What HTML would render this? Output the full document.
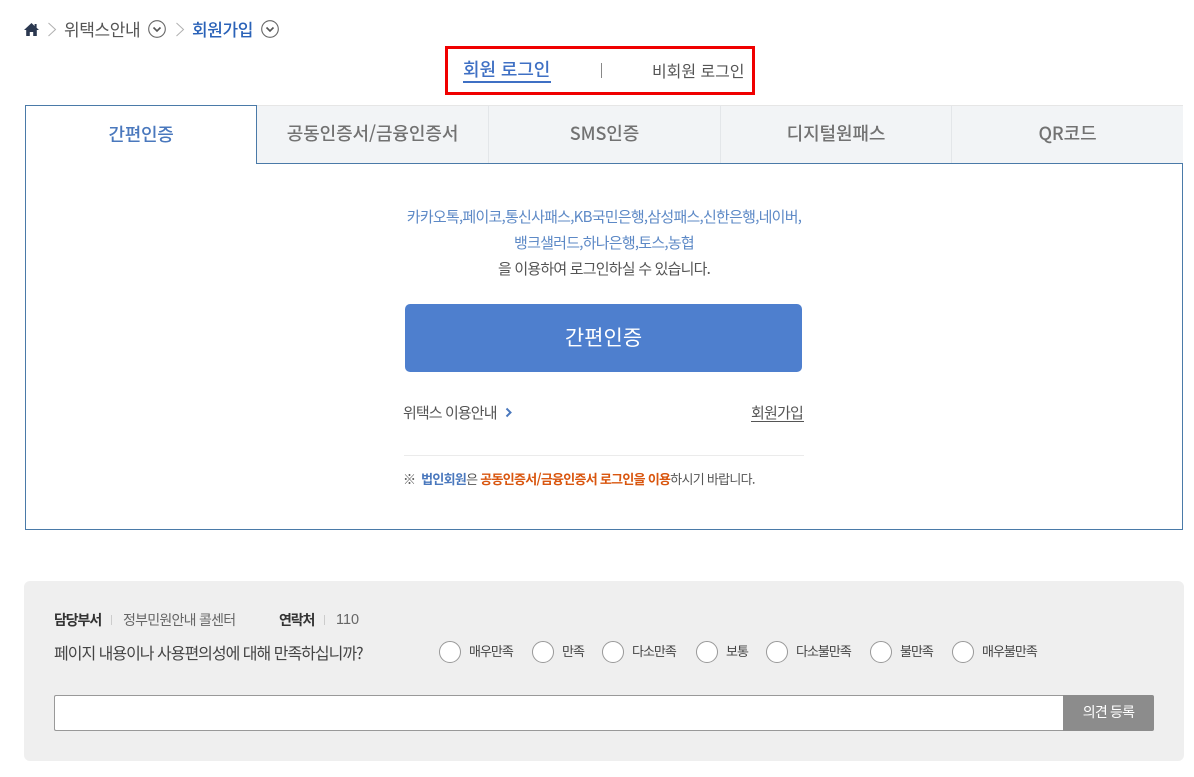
<!DOCTYPE html>
<html lang="ko"><head><meta charset="utf-8"><title>회원가입</title>
<style>
*{box-sizing:border-box}
html,body{margin:0;padding:0;background:#fff}
body{width:1194px;height:777px;position:relative;overflow:hidden;font-family:"Noto Sans CJK KR","Liberation Sans",sans-serif;color:#444}
.a{position:absolute;white-space:nowrap;line-height:1}
.tab{position:absolute;top:105px;height:58px;background:#f2f4f6;border-top:1px solid #e6e6e6;border-right:1px solid #e3e6e9;text-align:center;font-size:18px;font-weight:500;line-height:54px;color:#727272;letter-spacing:-.1px}
.r{position:absolute;top:641px;width:22px;height:22px;border:1px solid #999;border-radius:50%;background:#fff}
.l{position:absolute;top:644px;font-size:13px;line-height:14px;letter-spacing:-1px;color:#444;white-space:nowrap}
</style></head><body>
<svg class="a" style="left:24px;top:22px" width="15" height="15" viewBox="0 0 15 15"><path d="M7.500 1 0 8h2.200v6h3.600v-4h3.400v4h3.600V8H15L12.600 5.800V2h-2v2L7.500 1z" fill="#2b3850"/></svg>
<svg class="a" style="left:47px;top:22px" width="10" height="15" viewBox="0 0 10 15"><path d="M1.500 1 8.500 7.500 1.500 14" fill="none" stroke="#b0b0b0" stroke-width="1"/></svg>
<div class="a" style="left:64px;top:20px;font-size:17px;color:#555;letter-spacing:-.4px">위택스안내</div>
<svg class="a" style="left:148px;top:20px" width="18" height="18" viewBox="0 0 18 18"><circle cx="9" cy="9" r="8.300" fill="#fff" stroke="#666" stroke-width="1.100"/><path d="M5.500 7.500 9 11l3.500-3.500" fill="none" stroke="#555" stroke-width="1.600"/></svg>
<svg class="a" style="left:175px;top:22px" width="10" height="15" viewBox="0 0 10 15"><path d="M1.500 1 8.500 7.500 1.500 14" fill="none" stroke="#b0b0b0" stroke-width="1"/></svg>
<div class="a" style="left:192px;top:20px;font-size:17px;font-weight:500;color:#2a62b8;letter-spacing:-.4px">회원가입</div>
<svg class="a" style="left:261px;top:20px" width="18" height="18" viewBox="0 0 18 18"><circle cx="9" cy="9" r="8.300" fill="#fff" stroke="#666" stroke-width="1.100"/><path d="M5.500 7.500 9 11l3.500-3.500" fill="none" stroke="#555" stroke-width="1.600"/></svg>

<div class="a" style="left:445px;top:46px;width:310px;height:49px;border:3px solid #f00000"></div>
<div class="a" style="left:463px;top:60px;font-size:18px;font-weight:500;color:#3f70c4;letter-spacing:-.1px">회원 로그인</div>
<div class="a" style="left:463px;top:81px;width:88px;height:2px;background:#3f70c4"></div>
<div class="a" style="left:601px;top:63px;width:1px;height:15px;background:#888"></div>
<div class="a" style="left:652px;top:62px;font-size:16px;color:#555;letter-spacing:-.05px">비회원 로그인</div>

<div class="tab" style="left:257px;width:232px">공동인증서/금융인증서</div>
<div class="tab" style="left:489px;width:232px">SMS인증</div>
<div class="tab" style="left:721px;width:231px">디지털원패스</div>
<div class="tab" style="left:952px;width:231px;border-right:0">QR코드</div>
<div class="a" style="left:25px;top:163px;width:1158px;height:367px;border:1px solid #4a7aa8;border-top:0"></div>
<div class="a" style="left:257px;top:163px;width:926px;height:1px;background:#4a7aa8"></div>
<div class="a" style="left:25px;top:105px;width:232px;height:59px;background:#fff;border:1px solid #4a7aa8;border-bottom:0;text-align:center;font-size:18px;line-height:56px;font-weight:500;letter-spacing:-.3px;color:#4a78bd">간편인증</div>

<div class="a" style="left:25px;width:1158px;top:209px;text-align:center;font-size:15px;color:#5d89c6;letter-spacing:-.75px">카카오톡,페이코,통신사패스,KB국민은행,삼성패스,신한은행,네이버,</div>
<div class="a" style="left:25px;width:1158px;top:235px;text-align:center;font-size:15px;color:#5d89c6;letter-spacing:-.75px">뱅크샐러드,하나은행,토스,농협</div>
<div class="a" style="left:25px;width:1158px;top:261px;text-align:center;font-size:15px;color:#555;letter-spacing:-.8px">을 이용하여 로그인하실 수 있습니다.</div>

<div class="a" style="left:405px;top:304px;width:397px;height:68px;background:#4e7fce;border-radius:5px;color:#fff;text-align:center;font-size:21px;line-height:66px">간편인증</div>

<div class="a" style="left:403px;top:405px;font-size:15px;color:#555;letter-spacing:-.9px">위택스 이용안내</div>
<svg class="a" style="left:505px;top:407px" width="8" height="11" viewBox="0 0 8 11"><path d="M1.500 1.500 5.500 5.500 1.500 9.500" fill="none" stroke="#4a78bd" stroke-width="2"/></svg>
<div class="a" style="left:751px;top:405px;font-size:15px;color:#555;letter-spacing:-.8px">회원가입</div>
<div class="a" style="left:751px;top:421px;width:53px;height:1px;background:#555"></div>
<div class="a" style="left:404px;top:455px;width:400px;height:1px;background:#ebebeb"></div>
<div class="a" style="left:403px;top:472px;font-size:13px;color:#555;letter-spacing:-.72px">※&nbsp; <b style="color:#4a78bd;font-weight:700">법인회원</b>은 <b style="color:#d9560f;font-weight:700">공동인증서/금융인증서 로그인을 이용</b>하시기 바랍니다.</div>

<div class="a" style="left:24px;top:581px;width:1160px;height:180px;background:#efefef;border-radius:6px"></div>
<div class="a" style="left:54px;top:613px;font-size:14px;font-weight:700;color:#333;letter-spacing:-1.1px">담당부서</div>
<div class="a" style="left:111px;top:615px;width:1px;height:10px;background:#ccc"></div>
<div class="a" style="left:123px;top:613px;font-size:14px;color:#666;letter-spacing:-.75px">정부민원안내 콜센터</div>
<div class="a" style="left:279px;top:613px;font-size:14px;font-weight:700;color:#333;letter-spacing:-1.1px">연락처</div>
<div class="a" style="left:324px;top:615px;width:1px;height:10px;background:#ccc"></div>
<div class="a" style="left:336px;top:613px;font-size:14.5px;color:#666;font-family:'Liberation Sans',sans-serif">110</div>
<div class="a" style="left:54px;top:644px;font-size:16px;color:#444;letter-spacing:-1px">페이지 내용이나 사용편의성에 대해 만족하십니까?</div>

<div class="r" style="left:439px"></div><div class="l" style="left:469px">매우만족</div>
<div class="r" style="left:532px"></div><div class="l" style="left:562px">만족</div>
<div class="r" style="left:602px"></div><div class="l" style="left:632px">다소만족</div>
<div class="r" style="left:696px"></div><div class="l" style="left:726px">보통</div>
<div class="r" style="left:766px"></div><div class="l" style="left:796px">다소불만족</div>
<div class="r" style="left:870px"></div><div class="l" style="left:900px">불만족</div>
<div class="r" style="left:952px"></div><div class="l" style="left:982px">매우불만족</div>

<div class="a" style="left:54px;top:695px;width:1010px;height:36px;background:#fff;border:1px solid #999;border-right:0;border-radius:2px 0 0 2px"></div>
<div class="a" style="left:1063px;top:695px;width:91px;height:36px;background:#8c8c8c;border-radius:0 2px 2px 0;color:#fff;text-align:center;font-size:14px;line-height:35px;letter-spacing:-.8px">의견 등록</div>
</body></html>
